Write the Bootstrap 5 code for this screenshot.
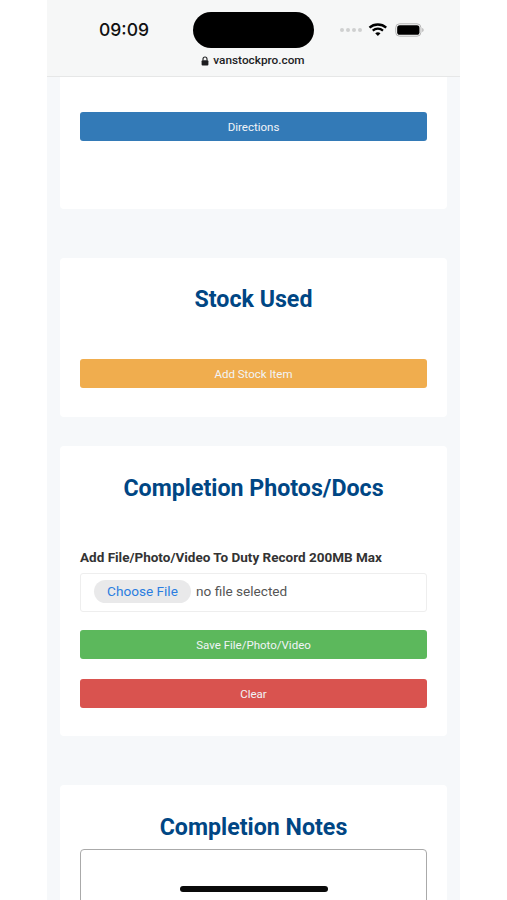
<!DOCTYPE html>
<html lang="en">
<head>
<meta charset="utf-8">
<title>Van Stock Pro</title>
<link href="https://cdn.jsdelivr.net/npm/bootstrap@5.3.0/dist/css/bootstrap.min.css" rel="stylesheet">
<style>
html, body { height: 900px; overflow: hidden; background: #fff; }
body { font-family: Roboto, "Liberation Sans", sans-serif; }
.phone { width: 413px; height: 900px; margin-left: 47px; background: #f6f8fa; position: relative; overflow: hidden; }
.status-top { height: 77px; background: #f6f7f7; border-bottom: 1px solid #e6e7e7; padding: 0 35px 0 52px; }
.clock { font: 500 17.5px/1 Inter, Roboto, sans-serif; color: #111; width: 95px; }
.island { width: 121px; height: 36px; background: #000; border-radius: 18px; }
.top-row { height: 54px; padding-top: 5px; }
.signal { gap: 2px; margin-left: 26px; margin-right: 6px; }
.signal i { width: 4px; height: 4px; border-radius: 50%; background: #cfd0d0; display: block; }
.url-row { font: 500 11.8px/1 Roboto, sans-serif; color: #1d1d1f; gap: 4px; margin-top: 1px; margin-left: -18px; }
.sheet { padding: 0 13px; }
.panel { background: #fff; border-radius: 4px; padding: 0 20px; }
.panel-a { height: 132px; padding-top: 35px; margin-bottom: 49px; border-radius: 0 0 4px 4px; }
.panel-b { height: 159px; padding-top: 24px; margin-bottom: 29px; }
.panel-c { height: 290px; padding-top: 25px; margin-bottom: 49px; }
.panel-d { height: 200px; padding-top: 25px; }
.head-blue { font: 700 23.2px/34px Roboto, sans-serif; color: #004684; text-align: center; margin: 0; }
.wide-btn { display: block; width: 100%; height: 29px; padding: 0; border: 0; border-radius: 3px; color: #f1f4f7; font: 400 11.5px/30px Roboto, sans-serif; text-align: center; }
.wide-btn:hover, .wide-btn:focus { color: #f1f4f7; }
.bg-dir, .bg-dir:hover { background: #337ab7; }
.bg-add, .bg-add:hover { background: #f0ad4e; }
.bg-save, .bg-save:hover { background: #5cb85c; }
.bg-clear, .bg-clear:hover { background: #d9534f; }
.panel-b .wide-btn { margin-top: 43px; }
.file-label { font: 700 13.5px/16px Roboto, sans-serif; color: #333; margin: 44px 0 8px; display: block; }
.file-box { height: 39px; border: 1px solid #eee; border-radius: 3px; padding: 0 0 2px 13px; gap: 5px; font: 400 13.6px/1 Roboto, sans-serif; color: #555; margin-bottom: 18px; }
.file-pick { background: #e9e9ea; color: #2b7de0; border-radius: 12px; height: 23px; width: 97px; line-height: 23px; text-align: center; }
.panel-c .bg-clear { margin-top: 20px; }
.notes-box { display: block; width: 100%; height: 120px; border: 1px solid #aaa; border-radius: 4px; background: #fff; margin-top: 5px; resize: none; }
.home-bar { position: absolute; left: 133px; top: 886px; width: 148px; height: 6px; border-radius: 3px; background: #0a0a0a; }
</style>
</head>
<body>
<div class="phone">
  <div class="status-top">
    <div class="d-flex align-items-center top-row">
      <div class="clock">09:09</div>
      <div class="island flex-shrink-0"></div>
      <div class="d-flex signal"><i></i><i></i><i></i><i></i></div>
      <svg width="20" height="15" viewBox="0 0 20 15" class="me-2"><path d="M1.5 5.6C6.3 1.3 13.7 1.3 18.5 5.6" fill="none" stroke="#000" stroke-width="2.4"/><path d="M4.8 8.6C7.8 6 12.2 6 15.2 8.6" fill="none" stroke="#000" stroke-width="2.3"/><path d="M7.3 11.2C9 10 11 10 12.7 11.2L10 14Z" fill="#000"/></svg>
      <svg width="30" height="14" viewBox="0 0 30 14"><rect x=".7" y=".7" width="25.6" height="12.6" rx="4" fill="none" stroke="#b5b5b5" stroke-width="1"/><rect x="2.2" y="2.2" width="22.6" height="9.6" rx="2.6" fill="#000"/><path d="M27.6 5v4c.9-.3 1.4-1.1 1.4-2s-.5-1.700-1.400-2z" fill="#b5b5b5"/></svg>
    </div>
    <div class="d-flex justify-content-center align-items-center url-row">
      <svg width="8" height="10" viewBox="0 0 8 10"><path d="M2 4.500V3a2 2 0 0 1 4 0v1.500" fill="none" stroke="#1d1d1f" stroke-width="1.100"/><rect x=".6" y="4.200" width="6.800" height="5.300" rx="1" fill="#1d1d1f"/></svg>
      <span>vanstockpro.com</span>
    </div>
  </div>
  <div class="sheet">
    <section class="panel panel-a">
      <a class="btn wide-btn bg-dir" href="#">Directions</a>
    </section>
    <section class="panel panel-b">
      <h2 class="head-blue">Stock Used</h2>
      <button class="btn wide-btn bg-add" type="button">Add Stock Item</button>
    </section>
    <section class="panel panel-c">
      <h2 class="head-blue">Completion Photos/Docs</h2>
      <span class="file-label">Add File/Photo/Video To Duty Record 200MB Max</span>
      <div class="d-flex align-items-center file-box">
        <span class="file-pick">Choose File</span>
        <span>no file selected</span>
      </div>
      <button class="btn wide-btn bg-save" type="button">Save File/Photo/Video</button>
      <button class="btn wide-btn bg-clear" type="button">Clear</button>
    </section>
    <section class="panel panel-d">
      <h2 class="head-blue">Completion Notes</h2>
      <textarea class="notes-box" aria-label="Completion Notes"></textarea>
    </section>
  </div>
  <div class="home-bar"></div>
</div>
<script src="https://cdn.jsdelivr.net/npm/bootstrap@5.3.0/dist/js/bootstrap.bundle.min.js"></script>
</body>
</html>
